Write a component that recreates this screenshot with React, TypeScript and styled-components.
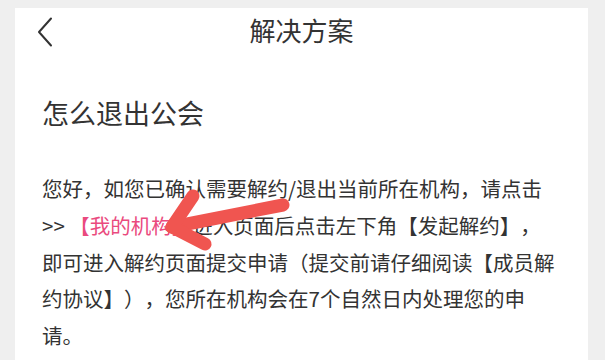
import React from 'react'
import styled, { createGlobalStyle } from 'styled-components'

const GlobalStyle = createGlobalStyle`
  html, body {
    margin: 0;
    padding: 0;
    background: #efefef;
  }
  body {
    font-family: "Noto Sans CJK SC", "Noto Sans", sans-serif;
    color: #333;
    text-spacing-trim: space-all;
  }
`

const Screen = styled.div`
  position: relative;
  width: 605px;
  height: 360px;
  overflow: hidden;
  padding-top: 8px;
  box-sizing: border-box;
`

const Card = styled.div`
  margin: 0 17px 0 15px;
  height: 352px;
  background: #fff;
  padding: 0 20px 0 27px;
  box-sizing: border-box;
`

const NavBar = styled.div`
  position: relative;
  height: 44px;
  margin: 0 -20px 0 -27px;
  display: flex;
  align-items: center;
  justify-content: center;
`

const BackButton = styled.button`
  position: absolute;
  left: 21px;
  top: 8px;
  width: 18px;
  height: 32px;
  padding: 0;
  border: 0;
  background: none;
  display: flex;
  align-items: center;
  justify-content: center;
`

const NavTitle = styled.h1`
  margin: 0;
  font-size: 26px;
  font-weight: 400;
  color: #333;
  line-height: 1;
`

const Heading = styled.h2`
  margin: 45px 0 0;
  font-size: 27px;
  font-weight: 400;
  line-height: 32px;
  color: #333;
`

const Body = styled.p`
  margin: 41px 0 0;
  font-size: 20.5px;
  line-height: 36.75px;
  color: #333;
  white-space: nowrap;
`

const Line = styled.span`
  display: block;
`

const Link = styled.span`
  color: #ea4a7e;
`

const Annotation = styled.svg`
  position: absolute;
  left: 0;
  top: 0;
  pointer-events: none;
`

export default function App() {
  return (
    <Screen>
      <GlobalStyle />
      <Card>
        <NavBar>
          <BackButton aria-label="返回">
            <svg width="16" height="30" viewBox="0 0 16 30">
              <path d="M14 1.5 L2 15 L14 28.5" fill="none" stroke="#333" strokeWidth="2" strokeLinecap="round" strokeLinejoin="round" />
            </svg>
          </BackButton>
          <NavTitle>解决方案</NavTitle>
        </NavBar>
        <Heading>怎么退出公会</Heading>
        <Body>
          <Line>您好，如您已确认需要解约/退出当前所在机构，请点击</Line>
          <Line>
            &gt;&gt; <Link>【我的机构】</Link>进入页面后点击左下角【发起解约】，
          </Line>
          <Line>即可进入解约页面提交申请（提交前请仔细阅读【成员解</Line>
          <Line>约协议】），您所在机构会在7个自然日内处理您的申</Line>
          <Line>请。</Line>
        </Body>
      </Card>
      <Annotation width="605" height="360" viewBox="0 0 605 360">
        <g fill="none" stroke="#f05550" strokeWidth="13" strokeLinecap="round" strokeLinejoin="round">
          <path d="M283 205 L172 227" />
          <path d="M193 196 L172 227 L205 244" />
        </g>
      </Annotation>
    </Screen>
  )
}
